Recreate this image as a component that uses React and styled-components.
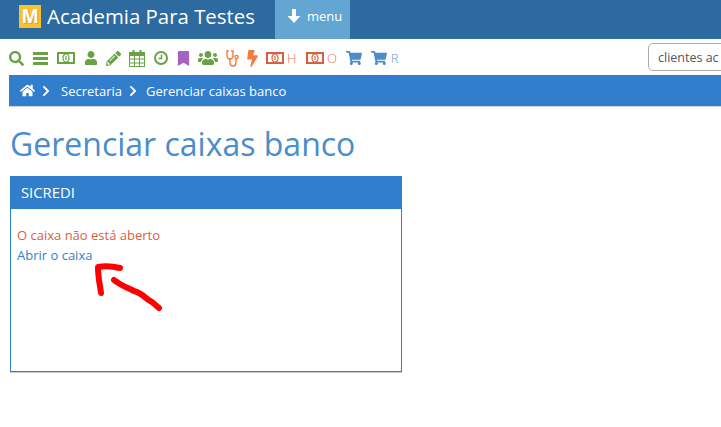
import React from "react";
import styled, { createGlobalStyle } from "styled-components";
import {
  FaBolt,
  FaBookmark,
  FaChevronRight,
  FaHome,
  FaPencilAlt,
  FaSearch,
  FaShoppingCart,
  FaUser,
  FaUsers,
} from "react-icons/fa";

const GREEN = "#68a243";
const ORANGE = "#f27c3a";
const RED = "#d9603f";
const BLUE = "#4a8dcc";

const GlobalStyle = createGlobalStyle`
  html, body {
    margin: 0;
    padding: 0;
    background: #fff;
    overflow: hidden;
  }
  body {
    font-family: "Open Sans", "Liberation Sans", sans-serif;
    font-size: 13px;
    color: #333;
  }
`;

const Page = styled.div`
  position: relative;
  width: 721px;
  height: 427px;
  overflow: hidden;
`;

const TopBar = styled.header`
  display: flex;
  align-items: stretch;
  height: 39px;
  padding-left: 19px;
  background: #2d6aa0;
`;

const Logo = styled.div`
  display: flex;
  align-items: center;
  justify-content: center;
  width: 22px;
  height: 23px;
  margin-top: 5px;
  background: #fcc02e;
  color: #fff;
  font-family: "Liberation Sans", sans-serif;
  font-size: 20px;
  font-weight: 700;
  text-shadow: 1px 1px 0 #e0a020;
`;

const Brand = styled.div`
  margin-left: 6px;
  width: 228px;
  color: #fff;
  font-size: 20.4px;
  line-height: 32px;
  white-space: nowrap;
`;

const MenuTab = styled.div`
  display: flex;
  align-items: center;
  gap: 6px;
  width: 75px;
  height: 39px;
  padding: 0 0 7px 12px;
  box-sizing: border-box;
  background: #62a6d1;
  color: #fff;
  font-size: 13px;
`;

const ToolBar = styled.nav`
  display: flex;
  align-items: center;
  height: 36px;
  padding: 2px 0 0 9px;
  box-sizing: border-box;
`;

const Tool = styled.span`
  display: flex;
  flex: none;
  align-items: center;
  justify-content: center;
  width: ${(p) => p.$w}px;
  margin-right: ${(p) => p.$gap ?? 9}px;
  color: ${(p) => p.$color};

  svg {
    display: block;
    flex: none;
  }
`;

const Letter = styled.span`
  width: 9px;
  margin-left: 3px;
  opacity: 0.85;
  font-size: 13px;
  font-weight: 300;
  line-height: 1;
  text-align: center;
`;

const SearchBox = styled.div`
  box-sizing: border-box;
  flex: none;
  width: 120px;
  height: 28px;
  margin: -2px -47px 0 auto;
  padding-left: 9px;
  border: 1px solid #aaa;
  border-radius: 5px;
  color: #555;
  font-size: 12.5px;
  line-height: 27px;
  white-space: nowrap;
  overflow: hidden;
`;

const Breadcrumb = styled.div`
  display: flex;
  align-items: center;
  height: 32px;
  margin-left: 9px;
  padding-left: 11px;
  background: #317ecc;
  color: #fff;
  font-size: 13px;
  border-bottom: 1px solid #cfd4d8;
  box-sizing: border-box;
`;

const Crumb = styled.span`
  display: flex;
  margin: ${(p) => p.$margin};
`;

const Title = styled.h1`
  margin: 16px 0 0 10px;
  color: #4a8dcc;
  font-size: 32px;
  font-weight: 400;
  line-height: 42px;
`;

const Panel = styled.section`
  box-sizing: border-box;
  width: 392px;
  height: 196px;
  margin: 11px 0 0 10px;
  border: 1px solid #317ecc;
  box-shadow: 0 1px 0 #cccccc;
`;

const PanelHead = styled.div`
  height: 32px;
  padding-left: 10px;
  background: #317ecc;
  color: #fff;
  font-size: 14.8px;
  line-height: 30px;
`;

const PanelBody = styled.div`
  padding: 16px 6px;
  font-size: 13px;
  line-height: 20px;
`;

const Warning = styled.div`
  color: #d9603f;
`;

const OpenLink = styled.a`
  color: #317ecc;
`;

const Arrow = styled.svg`
  position: absolute;
  left: 90px;
  top: 260px;
`;

function Bars() {
  return (
    <svg width="15" height="13" viewBox="0 0 15 13" fill={GREEN}>
      <rect width="15" height="3" />
      <rect y="5" width="15" height="3" />
      <rect y="10" width="15" height="3" />
    </svg>
  );
}

function Note({ color }) {
  return (
    <svg width="18" height="12" viewBox="0 0 18 12">
      <rect width="18" height="12" fill={color} />
      <rect x="2" y="2" width="14" height="8" fill="#fff" />
      <ellipse cx="9" cy="6" rx="3" ry="4" fill="none" stroke={color} strokeWidth="1.2" />
      <rect x="8.4" y="4" width="1.2" height="4" fill={color} />
    </svg>
  );
}

function Calendar() {
  return (
    <svg width="16" height="17" viewBox="0 0 16 17" fill="none" stroke={GREEN}>
      <rect x="0.5" y="2.5" width="15" height="14" fill="#fff" />
      <rect x="0.5" y="2.5" width="15" height="3" fill={GREEN} />
      <path d="M4.5 0v4M11.5 0v4" strokeWidth="2" />
      <path d="M5.5 6v10M10.5 6v10M1 9h14M1 13h14" />
    </svg>
  );
}

function Clock() {
  return (
    <svg width="14" height="14" viewBox="0 0 14 14" fill="none" stroke={GREEN}>
      <circle cx="7" cy="7" r="6" strokeWidth="2" />
      <path d="M7.5 3.5v4h-3" strokeWidth="1.5" />
    </svg>
  );
}

function Stethoscope() {
  return (
    <svg width="13" height="17" viewBox="0 0 13 17" fill="none" stroke={ORANGE} strokeWidth="1.4">
      <path d="M3 1H1v4c0 2.5 1.5 4 3 4s3-1.5 3-4V1H5" />
      <path d="M4 9v3.5c0 2 1.2 3.5 3 3.5s3-1.5 3-3.5V9" />
      <circle cx="10.5" cy="7" r="1.6" />
    </svg>
  );
}

export default function App() {
  return (
    <Page>
      <GlobalStyle />
      <TopBar>
        <Logo>M</Logo>
        <Brand>Academia Para Testes</Brand>
        <MenuTab>
          <svg width="14" height="14" viewBox="0 0 14 14" fill="#fff">
            <path d="M5 0h4v7h4.5L7 14 .5 7H5z" />
          </svg>
          menu
        </MenuTab>
      </TopBar>
      <ToolBar>
        <Tool $color={GREEN} $w={15}><FaSearch size={15} /></Tool>
        <Tool $color={GREEN} $w={15}><Bars /></Tool>
        <Tool $color={GREEN} $w={18}><Note color={GREEN} /></Tool>
        <Tool $color={GREEN} $w={13}><FaUser size={14} /></Tool>
        <Tool $color={GREEN} $w={15} $gap={8}><FaPencilAlt size={15} /></Tool>
        <Tool $color={GREEN} $w={16}><Calendar /></Tool>
        <Tool $color={GREEN} $w={14} $gap={10}><Clock /></Tool>
        <Tool $color="#a463bf" $w={11} $gap={10}><FaBookmark size={15} /></Tool>
        <Tool $color={GREEN} $w={18}><FaUsers size={20} /></Tool>
        <Tool $color={ORANGE} $w={13}><Stethoscope /></Tool>
        <Tool $color={ORANGE} $w={9}><FaBolt size={17} /></Tool>
        <Tool $color={RED} $w={30} $gap={10}><Note color={RED} /><Letter>H</Letter></Tool>
        <Tool $color={RED} $w={30} $gap={10}><Note color={RED} /><Letter>O</Letter></Tool>
        <Tool $color={BLUE} $w={16}><FaShoppingCart size={16} /></Tool>
        <Tool $color={BLUE} $w={28} $gap={0}><FaShoppingCart size={16} /><Letter>R</Letter></Tool>
        <SearchBox>clientes ac</SearchBox>
      </ToolBar>
      <Breadcrumb>
        <FaHome size={15} />
        <Crumb $margin="0 9px 0 5px"><FaChevronRight size={12} /></Crumb>
        Secretaria
        <Crumb $margin="0 7px 0 5px"><FaChevronRight size={12} /></Crumb>
        Gerenciar caixas banco
      </Breadcrumb>
      <Title>Gerenciar caixas banco</Title>
      <Panel>
        <PanelHead>SICREDI</PanelHead>
        <PanelBody>
          <Warning>O caixa não está aberto</Warning>
          <OpenLink>Abrir o caixa</OpenLink>
        </PanelBody>
      </Panel>
      <Arrow width="80" height="60" viewBox="90 260 80 60" fill="none" stroke="#f00" strokeWidth="6" strokeLinecap="round" strokeLinejoin="round">
        <path d="M101 293 C100 285 98 278 98 267 C103 266 112 266 120 268" />
        <path d="M114 280 C120 285 128 288 134 291 C142 293 146 299 152 302 L159 308" />
      </Arrow>
    </Page>
  );
}
